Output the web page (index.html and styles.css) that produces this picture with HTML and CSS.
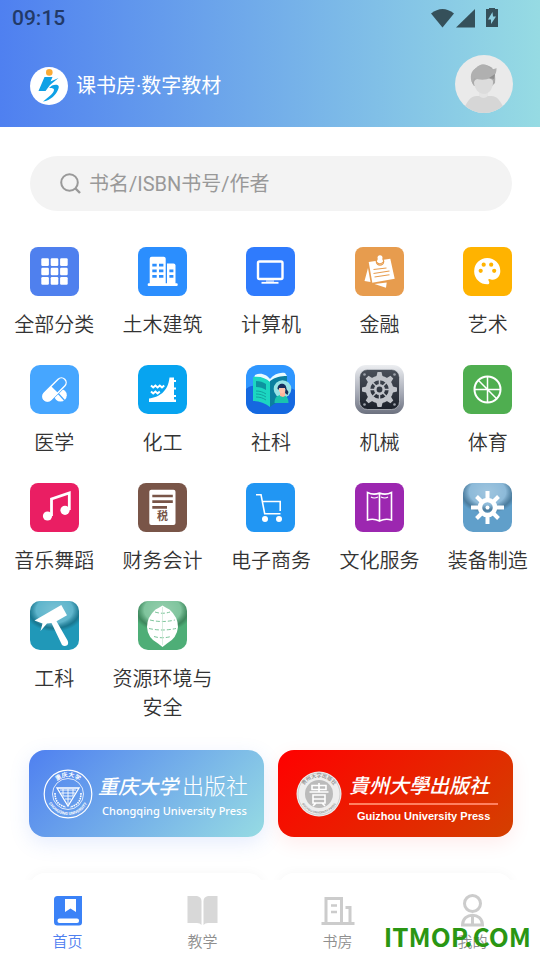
FILE: index.html
```html
<!DOCTYPE html>
<html lang="zh-CN">

<head>
    <meta charset="UTF-8">
    <meta name="viewport" content="width=device-width, initial-scale=1.0">
    <title>课书房·数字教材</title>
    <link rel="stylesheet" href="styles.css">
</head>

<body>
    <!-- 公用渐变 -->
    <svg class="defs" width="0" height="0" aria-hidden="true">
        <defs>
            <linearGradient id="silver" x1="0" y1="0" x2="0" y2="1">
                <stop offset="0" stop-color="#eceef1" />
                <stop offset="0.6" stop-color="#a3a7b3" />
                <stop offset="1" stop-color="#6c717f" />
            </linearGradient>
            <linearGradient id="dark" x1="0" y1="0" x2="0" y2="1">
                <stop offset="0" stop-color="#4a505a" />
                <stop offset="1" stop-color="#1c212b" />
            </linearGradient>
            <radialGradient id="gloss" cx="0.5" cy="0.25" r="0.62" gradientTransform="matrix(1 0 0 0.72 0 0)">
                <stop offset="0" stop-color="#fff" stop-opacity="0.4" />
                <stop offset="0.6" stop-color="#fff" stop-opacity="0.28" />
                <stop offset="0.84" stop-color="#000" stop-opacity="0.22" />
                <stop offset="1" stop-color="#000" stop-opacity="0" />
            </radialGradient>
        </defs>
    </svg>

    <div class="app">
        <header class="header">
            <div class="status">
                <span class="time">09:15</span>
                <svg width="70" height="20" viewBox="0 0 70 20" fill="#35505a" aria-hidden="true">
                    <path d="M0 5.500Q11.500-3.500 23 5.500L11.500 19.500z" />
                    <path d="M44 1V19.500H25z" />
                    <path d="M58 0h6v1h3v18H55V1h3z" />
                    <path d="M61.500 4l-4.500 7.500h3V16l5-7.500h-3z" fill="#8fd0e2" />
                </svg>
            </div>
            <div class="brand">
                <svg class="logo" viewBox="0 0 38 38" aria-hidden="true">
                    <circle cx="19" cy="19" r="19" fill="#fff" />
                    <circle cx="19.300" cy="5.400" r="3.300" fill="#fbab35" />
                    <path d="M14.500 10h8l-2 4.500 8-3.500-8.500 7-4.500 6H8.500z" fill="#0ea1e6" />
                    <path d="M19 21l3-2.500c4-1.500 8-1 6.500 3-2 6-8 12-15.500 13 4-3 11-8.500 11-11.500 0-2-3-1.800-5-2z" fill="#0ea1e6" />
                </svg>
                <h1>课书房·数字教材</h1>
                <a class="avatar" href="#" aria-label="个人头像">
                    <svg viewBox="0 0 58 58">
                        <defs>
                            <clipPath id="face"><circle cx="29" cy="29" r="29" /></clipPath>
                        </defs>
                        <g clip-path="url(#face)">
                            <rect width="58" height="58" fill="#eaeaea" />
                            <path d="M9 53c4-7 6-12 13-12h14c7 0 9 5 13 12v6H9z" fill="#d6d6d6" />
                            <path d="M24 36h9v5q-4.500 4-9 0z" fill="#e4e4e4" />
                            <path d="M17 28q-2-17 12-18 13 0 11 18l-3 3H19z" fill="#aaa" />
                            <path d="M19 27c1-3 4-4 10-4s9 1 9 4c0 7-4 12-9 12s-10-5-10-12z" fill="#dcdcdc" />
                            <path d="M16.500 27c-2-9 1-12 5-14 4-6 11-4 13 0 3 2 5 1 7 0 0 5-1 7-5 9-6 4-13 3-17 1-1 1-1.500 4-3 4z" fill="#b0b0b0" />
                            <path d="M34 23l6-4-1 5z" fill="#8f8f8f" />
                        </g>
                    </svg>
                </a>
            </div>
        </header>

        <main class="main">
            <form class="search" role="search">
                <label for="keyword" aria-label="搜索">
                    <svg width="22" height="22" viewBox="0 0 22 22" fill="none" stroke="#999" stroke-width="2">
                        <circle cx="9.500" cy="9.500" r="8.300" />
                        <path d="M15.500 15.500L20 20" stroke-width="2.400" />
                    </svg>
                </label>
                <input id="keyword" type="text" placeholder="书名/ISBN书号/作者">
            </form>

            <!-- 分类 -->
            <ul class="category">
                <li><a href="#">
                    <svg class="icon" viewBox="0 0 49 49">
                        <rect width="49" height="49" rx="8" fill="#4f80ee" />
                        <g fill="#fff">
                            <rect x="11.300" y="11.300" width="7.600" height="7.600" rx="1.200" /><rect x="20.700" y="11.300" width="7.600" height="7.600" rx="1.200" /><rect x="30.100" y="11.300" width="7.600" height="7.600" rx="1.200" />
                            <rect x="11.300" y="20.700" width="7.600" height="7.600" rx="1.200" /><rect x="20.700" y="20.700" width="7.600" height="7.600" rx="1.200" /><rect x="30.100" y="20.700" width="7.600" height="7.600" rx="1.200" />
                            <rect x="11.300" y="30.100" width="7.600" height="7.600" rx="1.200" /><rect x="20.700" y="30.100" width="7.600" height="7.600" rx="1.200" /><rect x="30.100" y="30.100" width="7.600" height="7.600" rx="1.200" />
                        </g>
                    </svg>
                    <span>全部分类</span>
                </a></li>
                <li><a href="#">
                    <svg class="icon" viewBox="0 0 49 49">
                        <rect width="49" height="49" rx="8" fill="#2b8efe" />
                        <g fill="#fff">
                            <path d="M11.700 37V11.700a2 2 0 0 1 2-2h12a2 2 0 0 1 2 2V37z" />
                            <path d="M29 37V16.500h6.500a2 2 0 0 1 2 2V37z" />
                            <rect x="9.700" y="36.300" width="30" height="2.700" rx="1" />
                        </g>
                        <path d="M14.300 18.200h4.400m2.300 0h4.400M14.300 23.800h4.400m2.300 0h4.400m6 0h4M14.300 29.300h4.400m2.300 0h4.400m6 0h4" stroke="#2b8efe" stroke-width="2.800" />
                    </svg>
                    <span>土木建筑</span>
                </a></li>
                <li><a href="#">
                    <svg class="icon" viewBox="0 0 49 49">
                        <rect width="49" height="49" rx="8" fill="#2f7bfd" />
                        <rect x="12" y="14.500" width="24.500" height="17.500" rx="1.500" fill="none" stroke="#fff" stroke-width="2.400" />
                        <path d="M15.500 35.800h17" stroke="#fff" stroke-width="1.800" />
                        <path d="M20 33h8v2h-8z" fill="#a9c9ff" />
                    </svg>
                    <span>计算机</span>
                </a></li>
                <li><a href="#">
                    <svg class="icon" viewBox="0 0 49 49">
                        <rect width="49" height="49" rx="8" fill="#e79c4e" />
                        <path d="M13.700 15l21.600-3.300 4.400 20-22.400 4zM13 21L9.500 34l6 1zM19.500 37l12.200-1.500-.700 5.200z" fill="#fff" />
                        <circle cx="25" cy="14.500" r="4.300" fill="#e79c4e" />
                        <circle cx="25" cy="14.500" r="3" fill="#fff" />
                        <circle cx="25" cy="10.700" r="2.500" fill="#fff" />
                        <path d="M22 15.500q3 3 6-.500M18.500 22.500l13-1.500M18.500 26.500l16-2.500M19.500 30l15-2.300" fill="none" stroke="#e79c4e" stroke-width="1.100" />
                    </svg>
                    <span>金融</span>
                </a></li>
                <li><a href="#">
                    <svg class="icon" viewBox="0 0 49 49">
                        <rect width="49" height="49" rx="8" fill="#ffb300" />
                        <path d="M24.300 11A13 13 0 0 0 24.300 37.300C27 37.300 26.500 35 25.500 33.500 25 32 26 31.500 28 32.500 33 33.500 37.300 30 37.300 24A13 13 0 0 0 24.300 11z" fill="#fff" />
                        <g fill="#ffb300">
                            <circle cx="20.700" cy="17.700" r="2.100" /><circle cx="28.200" cy="17.700" r="2.100" />
                            <circle cx="17.700" cy="23.800" r="2.100" /><circle cx="31.200" cy="23.800" r="2.100" />
                        </g>
                    </svg>
                    <span>艺术</span>
                </a></li>

                <li><a href="#">
                    <svg class="icon" viewBox="0 0 49 49">
                        <rect width="49" height="49" rx="10" fill="#46a6ff" />
                        <circle cx="30.500" cy="30.300" r="6.300" fill="#fff" />
                        <path d="M26 26l9 10" stroke="#46a6ff" stroke-width="1.200" />
                        <g transform="rotate(-45 24.500 24.500)">
                            <rect x="8.500" y="18.500" width="32" height="12" rx="6" fill="#46a6ff" />
                            <rect x="10" y="19.800" width="29" height="9.400" rx="4.700" fill="none" stroke="#fff" stroke-width="1.400" />
                            <path d="M24.500 19.500h-10a5 5 0 0 0 0 10h10z" fill="#fff" />
                        </g>
                    </svg>
                    <span>医学</span>
                </a></li>
                <li><a href="#">
                    <svg class="icon" viewBox="0 0 49 49">
                        <rect width="49" height="49" rx="10" fill="#07a4f0" />
                        <path d="M11 37v-3.500C21 32 30 27 31.500 12.500h4.500V15h2v2h-2v5.500h2v2h-2v5.500h2v2h-2v2.500h2V37z" fill="#fff" />
                        <path d="M13 20.500l2.200 2 2.200-2 2.200 2 2.200-2 2.200 2 2.200-2M13 26.500l2.200 2 2.200-2 2.200 2 2.200-2" fill="none" stroke="#fff" stroke-width="2" />
                    </svg>
                    <span>化工</span>
                </a></li>
                <li><a href="#">
                    <svg class="icon" viewBox="0 0 49 49">
                        <defs>
                            <clipPath id="tile"><rect width="49" height="49" rx="12" /></clipPath>
                        </defs>
                        <g clip-path="url(#tile)">
                            <rect width="49" height="49" fill="#2e96ff" />
                            <path d="M0 24c8-7 12-1 20 1s20-6 29 0v24H0z" fill="#1568e0" />
                            <path d="M24 16c5-5 11-6 17-5v26c-6-1-12 0-17 5z" fill="#0b7f9f" />
                            <path d="M24 14c4-5 10-7 15-6l2 3c-6 0-12 1-17 5z" fill="#e8fbff" />
                            <path d="M9 10c6-3 12 0 15 4v3L8 13z" fill="#e8fbff" />
                            <path d="M7 12c7-1 13 1 17 5v25c-5-4-11-6-17-6z" fill="#1cd6c1" />
                            <path d="M10 16c4 0 7 1 10 3v6c-3-2-6-3-10-3z" fill="#0d93a0" />
                            <path d="M10 26c4 0 7 1 10 3M10 29c4 0 7 1 10 3M10 32c4 0 7 1 10 3" fill="none" stroke="#11a39f" />
                            <circle cx="36.500" cy="24" r="8.800" fill="#98e3e5" />
                            <path d="M28.500 38c0-6 3-8 7-8s7 2 7 8z" fill="#19c3ad" />
                            <path d="M34 26h5v5l-2 1-3-1z" fill="#ffb39b" />
                            <path d="M31.500 24c0-7 9-7 9 0l2 3-1 3-2.500-2 .500-4-6 1z" fill="#172f5c" />
                            <path d="M33 23h6v3q-3 5-6 0z" fill="#ffc2ab" />
                        </g>
                    </svg>
                    <span>社科</span>
                </a></li>
                <li><a href="#">
                    <svg class="icon" viewBox="0 0 49 49">
                        <rect width="49" height="49" rx="11" fill="url(#silver)" />
                        <rect x="4.500" y="4.500" width="40" height="40" rx="8" fill="url(#dark)" stroke="#d8dbe0" stroke-width="0.600" />
                        <g fill="#9da2ab">
                            <circle cx="9.500" cy="9.500" r="1.300" /><circle cx="39.500" cy="9.500" r="1.300" />
                            <circle cx="9.500" cy="39.500" r="1.300" /><circle cx="39.500" cy="39.500" r="1.300" />
                        </g>
                        <g stroke="#c1c4ca" fill="none">
                            <circle cx="24.500" cy="24.500" r="11.500" stroke-width="4.500" />
                            <circle cx="24.500" cy="24.500" r="4.200" stroke-width="2.600" />
                            <path d="M24.500 14v6M24.500 29v6M14 24.500h6M29 24.500h6M17 17l4 4M28 28l4 4M17 32l4-4M28 21l4-4" stroke-width="1.500" />
                        </g>
                        <g fill="#c1c4ca">
                            <path id="tooth" d="M21 13l1.500-6h4l1.500 6zM21 36l1.500 6h4l1.500-6z" />
                            <use href="#tooth" transform="rotate(45 24.500 24.500)" />
                            <use href="#tooth" transform="rotate(90 24.500 24.500)" />
                            <use href="#tooth" transform="rotate(135 24.500 24.500)" />
                        </g>
                    </svg>
                    <span>机械</span>
                </a></li>
                <li><a href="#">
                    <svg class="icon" viewBox="0 0 49 49">
                        <rect width="49" height="49" rx="8" fill="#4fae50" />
                        <g fill="none" stroke="#fff">
                            <circle cx="24.500" cy="24.500" r="13" stroke-width="2" />
                            <path d="M24.500 11.500v26M11.500 24.500h26M15.300 15.300l18.400 18.400" stroke-width="1.500" />
                        </g>
                    </svg>
                    <span>体育</span>
                </a></li>

                <li><a href="#">
                    <svg class="icon" viewBox="0 0 49 49">
                        <rect width="49" height="49" rx="8" fill="#ea1e63" />
                        <path d="M21.500 33V16l17.800-6v17" fill="none" stroke="#fff" stroke-width="2.800" />
                        <circle cx="17.500" cy="33" r="4.600" fill="#fff" />
                        <circle cx="35" cy="27.300" r="4.600" fill="#fff" />
                    </svg>
                    <span>音乐舞蹈</span>
                </a></li>
                <li><a href="#">
                    <svg class="icon" viewBox="0 0 49 49">
                        <rect width="49" height="49" rx="8" fill="#795548" />
                        <rect x="11.300" y="6.800" width="26.200" height="35.200" rx="2" fill="#fff" />
                        <path d="M14.300 13h20.500M14.300 18.700h20.500M14.300 24.400h14.700" stroke="#795548" stroke-width="2.700" />
                        <text class="tax" x="24.500" y="36.500">税</text>
                    </svg>
                    <span>财务会计</span>
                </a></li>
                <li><a href="#">
                    <svg class="icon" viewBox="0 0 49 49">
                        <rect width="49" height="49" rx="8" fill="#2196f3" />
                        <path d="M10 11.700h5l3.700 19h15.800M16.200 18.500h18v9.500" fill="none" stroke="#fff" stroke-width="1.600" />
                        <circle cx="19" cy="36" r="3" fill="#fff" />
                        <circle cx="33" cy="36" r="3" fill="#fff" />
                    </svg>
                    <span>电子商务</span>
                </a></li>
                <li><a href="#">
                    <svg class="icon" viewBox="0 0 49 49">
                        <rect width="49" height="49" rx="8" fill="#9c27b0" />
                        <g fill="none" stroke="#fff" stroke-width="1.600">
                            <path d="M12.500 9.500q6 3 12 .500 6 2.500 12-.500v27.500q-6-2-12 1-6-3-12-1zM24.500 10v28" />
                            <path d="M16 14q3 2 7 0M26 14q4 2 7 0" stroke-width="1.200" />
                        </g>
                    </svg>
                    <span>文化服务</span>
                </a></li>
                <li><a href="#">
                    <svg class="icon" viewBox="0 0 49 49">
                        <rect width="49" height="49" rx="10" fill="#609fca" />
                        <rect width="49" height="49" rx="10" fill="url(#gloss)" />
                        <g fill="none" stroke="#fff">
                            <circle cx="24.500" cy="24.500" r="7.500" stroke-width="4.500" />
                            <path d="M24.500 8v9M24.500 32v9M8 24.500h9M32 24.500h9M13.500 13.500l6 6M29.500 29.500l6 6M13.500 35.500l6-6M29.500 19.500l6-6" stroke-width="4" />
                        </g>
                        <circle cx="24.500" cy="24.500" r="2" fill="#fff" />
                    </svg>
                    <span>装备制造</span>
                </a></li>

                <li><a href="#">
                    <svg class="icon" viewBox="0 0 49 49">
                        <rect width="49" height="49" rx="10" fill="#2098b8" />
                        <rect width="49" height="49" rx="10" fill="url(#gloss)" />
                        <path d="M4.500 19.500L31.300 4 37 14.300l-10.500 6L37 38.500q2 3 .500 5.500-3 2-5.500 0L21.500 22 17 22.500 10.500 30l2-7.500z" fill="#fff" />
                    </svg>
                    <span>工科</span>
                </a></li>
                <li><a href="#">
                    <svg class="icon" viewBox="0 0 49 49">
                        <rect width="49" height="49" rx="10" fill="#4eae77" />
                        <rect width="49" height="49" rx="10" fill="url(#gloss)" />
                        <path d="M24.500 4.500q3 2 7 4Q40 16 40 26q-1 11-11 16.500L24.500 46 20 42.500Q9.500 37 9 26q0-10 8.500-17.500 4-2 7-4z" fill="#fff" />
                        <path d="M17 11q7.500 2.500 15 0M12 19q12 3 25 0M11 27.500q13 3 27 0M16 35.500q8 2.500 17 0" fill="none" stroke="#7cc49a" stroke-width="1" stroke-dasharray="4 2" />
                        <path d="M24.500 6v38" stroke="#c7e6d3" stroke-width="0.700" />
                    </svg>
                    <span>资源环境与安全</span>
                </a></li>
            </ul>

            <!-- 出版社 -->
            <div class="press-list">
                <a class="press cqu" href="#">
                    <svg class="emblem" viewBox="0 0 50 50" aria-hidden="true">
                        <g fill="none" stroke="#fff">
                            <circle cx="25" cy="25" r="23.800" stroke-width="1.200" />
                            <circle cx="25" cy="25" r="15.500" stroke-width="0.800" />
                            <path d="M14 19h22L25 37z" stroke-width="1.300" />
                            <path d="M17 21h16M18 24h14M20 27h10M22 30h6M20 20v7M25 20v15M30 20v7" stroke-width="0.900" />
                            <path d="M12 24q0 12 11 14M38 24q0 12-11 14" stroke-width="1.600" stroke-dasharray="1.600 0.800" />
                        </g>
                        <path id="ring1" d="M4.500 18A21.500 21.500 0 1 0 45.500 18" fill="none" />
                        <path id="top1" d="M10.500 16A17 17 0 0 1 39.500 16" fill="none" />
                        <text class="ring"><textPath href="#ring1" startOffset="50%">CHONGQING UNIVERSITY</textPath></text>
                        <text class="ring cn"><textPath href="#top1" startOffset="50%">重庆大学</textPath></text>
                    </svg>
                    <span class="press-text">
                        <span class="press-cn"><i>重庆大学</i>出版社</span>
                        <span class="press-en">Chongqing University Press</span>
                    </span>
                </a>
                <a class="press gzu" href="#">
                    <svg class="emblem" viewBox="0 0 50 50" aria-hidden="true">
                        <circle cx="25" cy="25" r="22.500" fill="#eee" />
                        <circle cx="25" cy="25" r="14" fill="#bbb" />
                        <circle cx="25" cy="25" r="21" fill="none" stroke="#bbb" stroke-width="0.600" />
                        <g fill="none" stroke="#fff" stroke-width="1.600">
                            <path d="M18 16.500h14v4H18zM25 14v9M15.500 23h19M19 26h12v8H19zM19 30h12M22 34l-3 3M28 34l3 3" />
                        </g>
                        <path id="ring2" d="M5.500 27A19.600 19.600 0 0 0 44.500 27" fill="none" />
                        <path id="top2" d="M8.500 20A17.500 17.500 0 0 1 41.500 20" fill="none" />
                        <text class="ring gray"><textPath href="#ring2" startOffset="50%">GUIZHOU UNIVERSITY PRESS</textPath></text>
                        <text class="ring gray cn"><textPath href="#top2" startOffset="50%">贵州大学出版社</textPath></text>
                    </svg>
                    <span class="press-text">
                        <span class="press-cn"><i>貴州大學出版社</i></span>
                        <span class="press-en">Guizhou University Press</span>
                    </span>
                </a>
                <a class="press blank" href="#" aria-label="更多出版社"></a>
                <a class="press blank" href="#" aria-label="更多出版社"></a>
            </div>
        </main>

        <nav class="tabbar">
            <a class="current" href="#">
                <svg viewBox="0 0 34 34" width="34" height="34">
                    <path d="M6.500 2H31v26.500a3 3 0 0 1-3 3H6.500a3.500 3.500 0 0 1-3.500-3.500V5.500A3.500 3.500 0 0 1 6.500 2z" fill="#3b82f7" />
                    <path d="M14 5h11v13l-5.500-3.500L14 18z" fill="#fff" />
                    <rect x="6.500" y="24.500" width="21.500" height="4.500" rx="2" fill="#fff" />
                </svg>
                <span>首页</span>
            </a>
            <a href="#">
                <svg viewBox="0 0 34 34" width="34" height="34" fill="#d8d8d8">
                    <path d="M1.500 2h9.500q4.500 1 4.500 5v24q-1.500-2-4.500-2H1.500zM31.500 2H22q-4.500 1-4.500 5v24q1.500-2 4.500-2h9.500z" />
                </svg>
                <span>教学</span>
            </a>
            <a href="#">
                <svg viewBox="0 0 34 34" width="34" height="34" fill="none" stroke="#ccc" stroke-width="3">
                    <path d="M5 29V4.500h15.500V29M24.500 13.500H29v15.500M.500 29.500h33" />
                    <path d="M10 11.500h6M10 18h6" stroke-width="2.500" />
                </svg>
                <span>书房</span>
            </a>
            <a href="#">
                <svg viewBox="0 0 34 34" width="34" height="34" fill="none" stroke="#ccc" stroke-width="3">
                    <circle cx="16.500" cy="9.500" r="8" />
                    <path d="M6.500 31c0-13 20-13 20 0zM16.500 22v9" />
                </svg>
                <span>我的</span>
            </a>
        </nav>

        <div class="watermark">ITMOP.COM</div>
    </div>
</body>

</html>
```
FILE: styles.css
```css
* {
    margin: 0;
    padding: 0;
    box-sizing: border-box;
}

body {
    font-family: Roboto, "Noto Sans CJK SC", sans-serif;
    font-size: 20px;
    font-weight: 350;
    color: #333;
    background: #fff;
}

ul {
    list-style: none;
}

a {
    color: inherit;
    text-decoration: none;
}

svg {
    display: block;
}

.defs {
    position: absolute;
}

.app {
    position: relative;
    display: flex;
    flex-direction: column;
    height: 100vh;
}

/* 顶部 */
.header {
    flex: none;
    background: linear-gradient(to right, #4f80f0, #96dbe3);
}

.status {
    display: flex;
    align-items: center;
    justify-content: space-between;
    height: 35px;
    padding: 0 39px 0 12px;
}

.time {
    font-size: 21px;
    font-weight: 500;
    color: #223a68;
}

.brand {
    display: flex;
    align-items: center;
    padding: 20px 27px 14px 30px;
}

.logo {
    width: 38px;
    height: 38px;
    margin: 4px 8px 0 0;
}

.brand h1 {
    font-size: 20px;
    font-weight: 400;
    color: #fff;
}

.avatar {
    width: 58px;
    height: 58px;
    margin-left: auto;
}

/* 内容 */
.main {
    flex: 1;
    min-height: 0;
    overflow: hidden auto;
    scrollbar-width: none;
}

.search {
    display: flex;
    align-items: center;
    height: 55px;
    margin: 29px 28px 0 30px;
    padding: 0 30px;
    border-radius: 28px;
    background: #f3f3f3;
}

.search input {
    flex: 1;
    min-width: 0;
    margin-left: 7px;
    border: 0;
    outline: 0;
    background: none;
    font: inherit;
    font-weight: 400;
}

.search input::placeholder {
    color: #999;
}

.category {
    display: grid;
    grid-template-columns: repeat(5, 1fr);
    row-gap: 25px;
    margin: 36px -2px 0 0;
}

.category a {
    display: flex;
    flex-direction: column;
    align-items: center;
    gap: 15px;
    line-height: 29px;
    text-align: center;
}

.category span {
    max-width: 104px;
}

.icon {
    width: 49px;
    height: 49px;
}

.tax {
    font-size: 11px;
    font-weight: 700;
    text-anchor: middle;
    fill: #795548;
}

/* 出版社 */
.press-list {
    display: grid;
    grid-template-columns: 1fr 1fr;
    gap: 36px 14px;
    padding: 27px 27px 36px 29px;
}

.press {
    display: flex;
    align-items: center;
    height: 87px;
    padding-left: 14px;
    border-radius: 16px;
    color: #fff;
}

.cqu {
    background: linear-gradient(135deg, #4f80f0, #96dbe3);
    box-shadow: 0 6px 20px rgba(79, 128, 240, 0.15);
}

.gzu {
    padding-left: 16px;
    background: linear-gradient(135deg, #ff0000, #d44000);
    box-shadow: 0 6px 20px rgba(255, 0, 0, 0.08);
}

.blank {
    background: #fff;
    box-shadow: 0 0 12px rgba(0, 0, 0, 0.04);
}

.emblem {
    flex: none;
    width: 50px;
    height: 50px;
}

.ring {
    font-size: 4px;
    font-weight: 700;
    text-anchor: middle;
    fill: #fff;
}

.ring.cn {
    font-size: 6px;
}

.ring.gray {
    font-size: 3px;
    fill: #999;
}

.ring.gray.cn {
    font-size: 5px;
}

.press-text {
    display: flex;
    flex-direction: column;
    margin-left: 5px;
    padding-top: 4px;
    white-space: nowrap;
}

.press-cn {
    font-size: 22px;
    font-weight: 300;
    line-height: 30px;
}

.press-cn i {
    margin-right: 4px;
    font-size: 20px;
    font-weight: 500;
}

.press-en {
    padding-left: 4px;
    font-family: "Noto Sans", sans-serif;
    font-size: 11px;
    font-weight: 500;
    line-height: 18px;
}

.gzu .press-text {
    padding-top: 8px;
}

.gzu .press-en {
    margin-top: 2px;
    padding: 2px 8px 0;
    border-top: 2px solid #ff8060;
    font-family: "Liberation Sans", sans-serif;
    font-weight: 700;
}

/* 底部导航 */
.tabbar {
    position: relative;
    display: flex;
    flex: none;
    height: 80px;
    padding-top: 14px;
    background: #fff;
}

.tabbar a {
    display: flex;
    flex: 1;
    flex-direction: column;
    align-items: center;
    gap: 3px;
    font-size: 15px;
    line-height: 22px;
    color: #8f8f8f;
}

.tabbar .current {
    color: #4f80f0;
}

.watermark {
    position: absolute;
    right: 9px;
    bottom: 6px;
    font-family: "Noto Sans CJK SC", sans-serif;
    font-size: 26px;
    font-weight: 700;
    line-height: 36px;
    color: #2a9613;
    pointer-events: none;
}
```
